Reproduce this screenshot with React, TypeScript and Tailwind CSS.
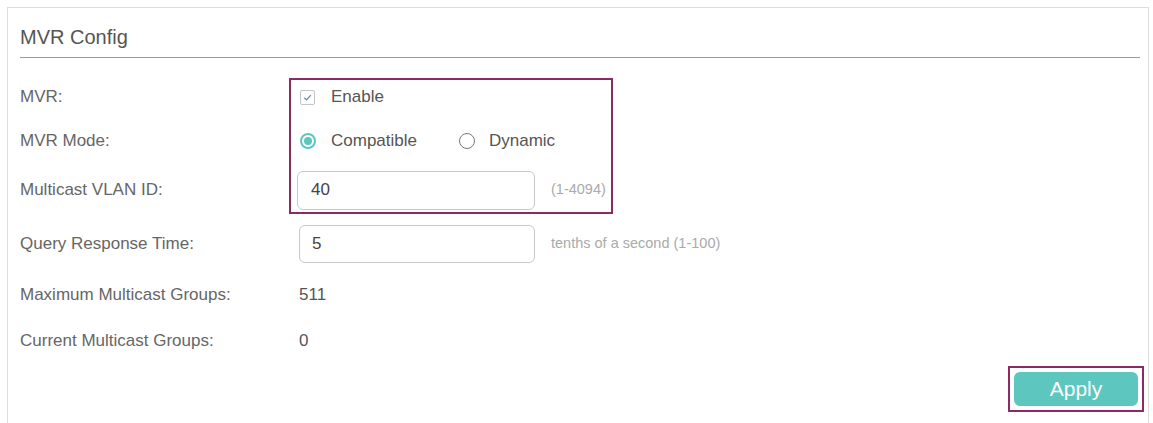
export default function App() {
  const font = { fontFamily: '"Liberation Sans", Arial, sans-serif' };

  return (
    <div className="h-[423px] overflow-hidden bg-white pl-[7px] pt-[7px]" style={font}>
      <div className="w-[1142px] border border-b-0 border-[#dcdcdc] pl-[12px] pr-[4px] pb-[12px]">
        <div className="mr-[4px] border-b border-[#9a9a9a] pt-[17px] pb-[8px]">
          <h1 className="text-[20px] leading-[24px] text-[#555]">MVR Config</h1>
        </div>

        <div className="mt-[20px] flex">
          <div className="w-[269px] pt-[2px] text-[17px] text-[#666]">
            <div className="flex h-[34px] items-center">MVR:</div>
            <div className="flex h-[54px] items-center">MVR Mode:</div>
            <div className="flex h-[44px] items-center">Multicast VLAN ID:</div>
          </div>

          <div className="w-[324px] border-2 border-[#8a2b63] pl-[6px] text-[17px] text-[#555]">
            <div className="flex h-[34px] items-center">
              <span className="ml-[3px] flex h-[15px] w-[15px] items-center justify-center rounded-[2px] border border-[#c4c4c4] bg-white">
                <svg viewBox="0 0 12 12" className="h-[11px] w-[11px]">
                  <path d="M2.5 6.2 L5 8.6 L9.6 3.4" fill="none" stroke="#6f85a3" strokeWidth="1.4" />
                </svg>
              </span>
              <span className="ml-[16px]">Enable</span>
            </div>

            <div className="flex h-[54px] items-center">
              <span className="ml-[3px] flex h-[16px] w-[16px] items-center justify-center rounded-full border-2 border-[#5cc6bf]">
                <span className="h-[8px] w-[8px] rounded-full bg-[#5cc6bf]" />
              </span>
              <span className="ml-[15px]">Compatible</span>
              <span className="ml-[42px] h-[16px] w-[16px] rounded-full border-[1.5px] border-[#777]" />
              <span className="ml-[14px]">Dynamic</span>
            </div>

            <div className="flex h-[44px] items-center">
              <div className="flex h-[39px] w-[238px] items-center rounded-[6px] border border-[#c8c8c8] pl-[13px] text-[#444]">
                40
              </div>
              <span className="ml-[16px] text-[14.5px] text-[#aaa]">(1-4094)</span>
            </div>
          </div>
        </div>

        <div className="text-[17px] text-[#666]">
          <div className="flex h-[60px] items-center">
            <div className="w-[279px]">Query Response Time:</div>
            <div className="flex h-[38px] w-[236px] items-center rounded-[6px] border border-[#c8c8c8] pl-[12px] text-[#444]">
              5
            </div>
            <span className="ml-[16px] text-[14.5px] text-[#aaa]">tenths of a second (1-100)</span>
          </div>
          <div className="flex h-[42px] items-center">
            <div className="w-[279px]">Maximum Multicast Groups:</div>
            <div className="text-[#555]">511</div>
          </div>
          <div className="flex h-[50px] items-center">
            <div className="w-[279px]">Current Multicast Groups:</div>
            <div className="text-[#555]">0</div>
          </div>
        </div>

        <div className="flex justify-end">
          <div className="border-2 border-[#8a2b63] p-[4px]">
            <button className="flex h-[34px] w-[124px] items-center justify-center rounded-[6px] bg-[#5cc6bf] text-[21px] text-white">
              Apply
            </button>
          </div>
        </div>
      </div>
    </div>
  );
}
